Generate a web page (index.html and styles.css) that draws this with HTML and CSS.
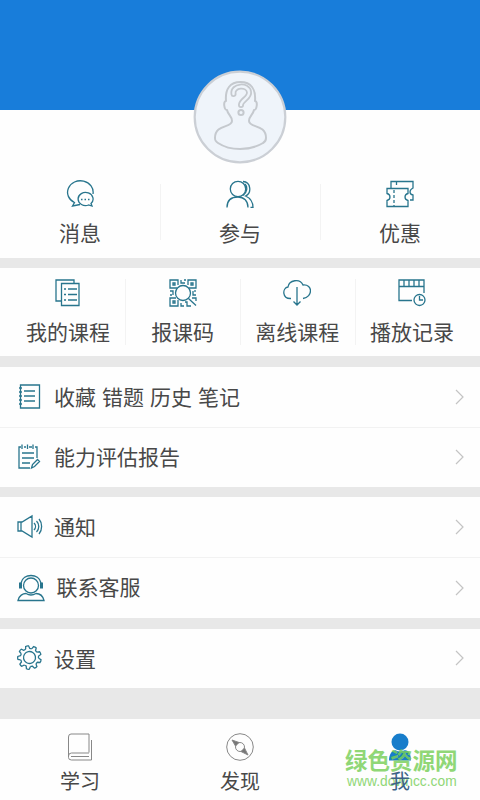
FILE: index.html
```
<!DOCTYPE html>
<html lang="zh-CN">
<head>
<meta charset="utf-8">
<title>我</title>
<link rel="stylesheet" href="styles.css">
</head>
<body>
<main class="app">
  <header class="cover">
    <svg class="avatar" viewBox="0 0 94 94">
      <circle cx="47" cy="47" r="45.3" fill="#eff4fa" stroke="#cbcfd5" stroke-width="2.2"/>
      <g fill="none" stroke="#c5c9ce" stroke-width="2" stroke-linejoin="round" stroke-linecap="round">
        <path d="M39 51C39 46 35 45 34 40C31 40 30 31 33 31C32 19 37 12 47.500 12C58 12 63 19 62 31C65 31 64 40 61 40C60 45 56 46 56 51C56 58 73 54 73 68C73 70 72 72 70 73C57 81 37 81 25 73C22 71 22 70 22 68C22 54 39 58 39 51Z"/>
        <path d="M40.500 24C39 15 55 14 56 22C57 28 48 30 48 35" stroke-width="6"/>
        <path d="M40.500 24C39 15 55 14 56 22C57 28 48 30 48 35" stroke="#eff4fa" stroke-width="2.400"/>
        <circle cx="48" cy="42.500" r="2.600" fill="#eff4fa"/>
      </g>
    </svg>
  </header>

  <section class="stats">
    <a class="tile"><svg class="icon" viewBox="0 0 28 28"><path d="M14 24.500 6.500 26 8.500 22.500A12.800 11.500 0 1 1 27 14"/><path d="M26 26 25 23.500A7.500 6.500 0 1 0 22.500 25Z"/><path d="M15 19.500h1.500M18.500 19.500H20M22 19.500h1.500" stroke-width="1.500"/></svg><span>消息</span></a>
    <a class="tile"><svg class="icon" viewBox="0 0 28 28"><circle cx="12" cy="9" r="7.700"/><path d="M1 27.500C1 20 6 17 12 17S22 21 22 27.500M17 1.500C25 2 26 13 19.500 16C24 18 27 22 27 27.500h-2.500M19 4C22 7 21 13 17 15.500"/></svg><span>参与</span></a>
    <a class="tile"><svg class="icon" viewBox="0 0 28 28"><path d="M1 8.500h21v5c-4 1-4 6 0 7v6H1v-6c4-1 4-6 0-7ZM5 8V1.500h22V8c-4 2-4 6 0 7v5h-3M10.500 2v3"/><path d="M8 10v16" stroke-dasharray="3 2"/></svg><span>优惠</span></a>
  </section>

  <section class="tools">
    <a class="tile"><svg class="icon" viewBox="0 0 28 28"><path d="M20 4V1H2v21h5M7.500 4.500H25v22H7.500Z"/><path d="M10 10h2M14 10h9M10 15.500h2M14 15.500h9M10 21h2M14 21h9"/></svg><span>我的课程</span></a>
    <a class="tile"><svg class="icon" viewBox="0 0 28 28"><path d="M8 9H1V1h8v5M19 6V1h8v8h-7M9 21v6H1v-8h6M4 4h2v2H4ZM22 4h2v2h-2ZM4 22h2v2H4ZM12 1v3h4M15 1h2M1 12h3v4M1 16h2M24 12v4h3M26 11v2M12 24v3h3M16 23h2v4h4M23 19h4v3"/><circle cx="14" cy="14" r="7.500"/><path d="m19.500 19.500 7.500 7"/></svg><span>报课码</span></a>
    <a class="tile"><svg class="icon" viewBox="0 0 28 28"><path d="M8 19.500C-1 20-1 9 5 8C6 1 17-1 20 6C30 5 30 18 20 19.500M14 8v18M10.500 22.500 14 26l3.500-3.500"/></svg><span>离线课程</span></a>
    <a class="tile"><svg class="icon" viewBox="0 0 28 28"><path d="M14 21.500H1V1h25v13M1 7.500h25M6 1v6M11 1v6M16 1v6M21 1v6"/><circle cx="21.500" cy="21" r="5.500"/><path d="M21.500 17v4H25"/></svg><span>播放记录</span></a>
  </section>

  <section class="group">
    <a class="row"><svg class="icon" viewBox="0 0 28 28"><path d="M3.500 2h19v23h-19Z"/><path d="M7 8h11M7 13h11M7 18h11M2 5h3M2 9h3M2 13h3M2 17h3M2 21h3"/></svg><span class="label spaced">收藏 错题 历史 笔记</span><svg class="chevron" viewBox="0 0 10 16"><path d="m1 1 7 7-7 7"/></svg></a>
    <a class="row"><svg class="icon" viewBox="0 0 28 28"><path d="M4 4H2v21h11M18 4h2v11M7 4h2M12 4h3M5 1.500V6M10.500 1.500V6M16 1.500V6M5 10h12M5 15h12M5 20h8M14.500 25l1-3.500 5-5 2 2-5 5Z"/></svg><span class="label">能力评估报告</span><svg class="chevron" viewBox="0 0 10 16"><path d="m1 1 7 7-7 7"/></svg></a>
  </section>

  <section class="group">
    <a class="row"><svg class="icon" viewBox="0 0 28 28"><path d="M1 9h4l10-6v21L5 18H1ZM4 9v9M17 10c2 2 2 5 0 7M19.500 8c3 3 3 8 0 11M22 6c3.500 4 3.500 11 0 15"/></svg><span class="label">通知</span><svg class="chevron" viewBox="0 0 10 16"><path d="m1 1 7 7-7 7"/></svg></a>
    <a class="row support"><svg class="icon" viewBox="0 0 28 28"><circle cx="14" cy="11.500" r="7.500"/><path d="M4 9C6-1 22-1 24 9M1 26.500c1-5 5-7 8-7q5 3 10 0c4 0 7 3 8 7Z"/><path d="M3.500 8.500v6M24.500 8.500v6" stroke-width="3"/></svg><span class="label">联系客服</span><svg class="chevron" viewBox="0 0 10 16"><path d="m1 1 7 7-7 7"/></svg></a>
  </section>

  <section class="group">
    <a class="row"><svg class="icon" viewBox="0 0 28 28">
      <defs><path id="tooth" d="M-2.070-8.960-1.460-11.600Q0-12.100 1.460-11.600L2.070-8.960Q3.100-8.200 4.180-8.200"/></defs>
      <g transform="translate(12.500 13.500) rotate(-12)">
        <use href="#tooth"/><use href="#tooth" transform="rotate(40)"/><use href="#tooth" transform="rotate(80)"/><use href="#tooth" transform="rotate(120)"/><use href="#tooth" transform="rotate(160)"/><use href="#tooth" transform="rotate(200)"/><use href="#tooth" transform="rotate(240)"/><use href="#tooth" transform="rotate(280)"/><use href="#tooth" transform="rotate(320)"/>
        <circle r="6"/>
      </g></svg><span class="label">设置</span><svg class="chevron" viewBox="0 0 10 16"><path d="m1 1 7 7-7 7"/></svg></a>
  </section>

  <nav class="tabs">
    <a class="tab"><svg class="icon" viewBox="0 0 28 28"><path d="M23 19.500V1H5Q2.500 1 2.500 4v20.500q0 2.500 3 2.500H25.500V7M23 20H5.500q-3 0-3 3M5 23.500h18"/></svg><span>学习</span></a>
    <a class="tab"><svg class="icon" viewBox="0 0 28 28"><circle cx="14" cy="14" r="13.300"/><circle cx="14" cy="14" r="4.500"/><path d="M6 7l7 2.500L9.500 13ZM22 22l-7-3.500 3.500-3.500Z" fill="#777"/></svg><span>发现</span></a>
    <a class="tab active"><svg class="icon" viewBox="0 0 28 28"><circle cx="14" cy="9" r="8.500"/><path d="M3 27.500c0-7 4-11 7-10q4 2 8 0c4-1 7 3 7 10Z"/></svg><span>我</span></a>
    <div class="watermark"><strong>绿色资源网</strong><span>www.downcc.com</span></div>
  </nav>
</main>
</body>
</html>
```
FILE: styles.css
```
* { box-sizing: border-box; }
body {
  margin: 0;
  font-family: "Noto Sans CJK SC", sans-serif;
  font-size: 21px;
  color: #484848;
  background: #e8e8e8;
}
.app {
  width: 480px;
  height: 800px;
  display: flex;
  flex-direction: column;
  overflow: hidden;
}
.cover {
  height: 110px;
  flex: none;
  position: relative;
  background: #187dda;
}
.avatar {
  position: absolute;
  left: 193px;
  top: 70px;
  width: 94px;
  height: 94px;
}
.icon {
  width: 28px;
  height: 28px;
  flex: none;
  display: block;
  fill: none;
  stroke: #28758d;
  stroke-width: 1.3;
}
.stats, .tools {
  display: grid;
  background: #fefefe;
}
.stats {
  height: 148px;
  grid-template-columns: repeat(3, 1fr);
  padding-top: 70px;
  margin-bottom: 10px;
}
.tools {
  height: 88px;
  grid-template-columns: repeat(4, 114.7px);
  padding: 11px 0 0 10.600px;
  margin-bottom: 11px;
}
.tile {
  display: flex;
  flex-direction: column;
  align-items: center;
  line-height: 30px;
  box-shadow: 1px 0 #f3f3f3;
}
.tile:last-child { box-shadow: none; }
.stats .tile { height: 56px; margin-top: 4px; }
.tools .tile { height: 66px; }
.stats .icon { margin-top: -4px; }
.tile span { margin-top: 9px; white-space: nowrap; }
.group {
  background: #fefefe;
  margin-bottom: 10px;
}
.row {
  height: 60px;
  display: flex;
  align-items: center;
  padding: 0 15px 0 17px;
}
.row + .row { border-top: 1px solid #f2f2f2; }
.row .icon, .row .chevron { margin-top: -1px; }
.label { margin: -3px 0 0 9px; line-height: 30px; }
.spaced { word-spacing: 1.3px; }
.support { height: 61px; }
.support .label { margin: -5px 0 0 11.500px; }
.group:has(.support) { margin-bottom: 11px; }
.group:nth-last-child(2) .row { height: 59px; }
.group:nth-last-child(2) .label { margin-top: -1px; }
.group:nth-last-child(2) { margin-bottom: 31px; }
.row .chevron {
  width: 10px;
  height: 16px;
  margin-left: auto;
  fill: none;
  stroke: #c4c4c4;
  stroke-width: 1.2;
}
.tabs {
  height: 81px;
  display: grid;
  grid-template-columns: repeat(3, 1fr);
  position: relative;
  background: #fefefe;
}
.tab {
  display: flex;
  flex-direction: column;
  align-items: center;
  padding-top: 14px;
  font-size: 20px;
  line-height: 28px;
}
.tab span { margin-top: 6px; }
.tab .icon { stroke: #888; stroke-width: 1; }
.tab.active { color: #3c6286; }
.tab.active span { position: relative; z-index: 1; }
.tab.active .icon { fill: #187dcb; stroke: none; }
.watermark {
  position: absolute;
  left: 345px;
  top: 28px;
  display: flex;
  flex-direction: column;
  color: #78cf59;
  opacity: .82;
  white-space: nowrap;
}
.watermark strong { font-size: 22.500px; line-height: 25px; }
.watermark span {
  margin-left: 2px;
  font-family: "Liberation Sans", sans-serif;
  font-size: 13.800px;
  line-height: 20px;
}
```
